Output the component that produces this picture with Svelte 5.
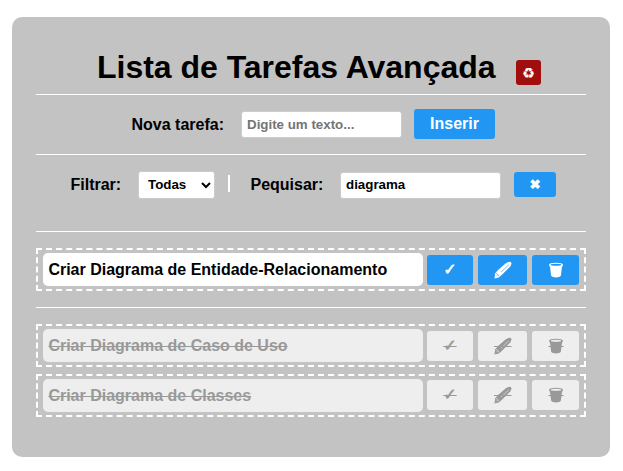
<script>
  const pending = ['Criar Diagrama de Entidade-Relacionamento'];
  const done = ['Criar Diagrama de Caso de Uso', 'Criar Diagrama de Classes'];
  let search = $state('diagrama');
</script>

{#snippet task(text, finished)}
  <li class="task" class:finished>
    <span class="text">{text}</span>
    <button class="btn check">✓</button>
    <button class="btn edit" aria-label="Editar">
      <svg width="20" height="20" viewBox="0 0 20 20">
        <path class="ink" d="M1.4 18.4 L2.3 13.2 L5 10 L12.6 3.4 Q15.6 1.2 17.8 1.9 Q19.2 3.2 17.4 6.3 L9 14.8 L5.8 17.4 Z" />
        <path class="cut" d="M3 13.4 Q5.2 13.8 5.8 16.4 M8 12.2 L15.8 4.8 M3.2 16.4 L4.4 15.2" />
        {#if finished}<path class="strike" d="M1 10.5 H18.5" />{/if}
      </svg>
    </button>
    <button class="btn remove" aria-label="Remover">
      <svg width="16" height="20" viewBox="0 0 16 20">
        <path class="ink" d="M1 4.8 Q1.2 2.7 8 2.7 Q14.8 2.7 15 4.8 Q15 6 14 6.7 L12.8 16 Q11.8 17.4 8 17.4 Q4.2 17.4 3.2 16 L2 6.7 Q1 6 1 4.8 Z" />
        <ellipse class="hole" cx="8" cy="4.8" rx="5.3" ry="1" />
        {#if finished}<path class="strike" d="M.5 10.5 H15.5" />{/if}
      </svg>
    </button>
  </li>
{/snippet}

<main>
  <header>
    <h1>Lista de Tarefas Avançada</h1>
    <button class="btn reset">♻</button>
  </header>
  <section class="new">
    <label for="new">Nova tarefa:</label>
    <input id="new" placeholder="Digite um texto..." />
    <button class="btn insert">Inserir</button>
  </section>
  <section class="filters">
    <label for="filter">Filtrar:</label>
    <select id="filter"><option>Todas</option></select>
    <span class="divider"></span>
    <label for="search">Pequisar:</label>
    <input id="search" bind:value={search} />
    <button class="btn clear">✖</button>
  </section>
  <ul class="pending">
    {#each pending as text}{@render task(text, false)}{/each}
  </ul>
  <ul>
    {#each done as text}{@render task(text, true)}{/each}
  </ul>
</main>

<style>
  :global(body) { background: #fff; }
  main {
    box-sizing: border-box;
    width: 598px;
    height: 440px;
    margin: 17px 0 0 12px;
    padding: 0 24px;
    border-radius: 10px;
    background: #c3c3c3;
    font: bold 16px "Liberation Sans", Arial, sans-serif;
    color: #000;
    display: flow-root;
  }
  header, section, ul { box-sizing: border-box; border-bottom: 1px solid #fff; }
  header, section { display: flex; align-items: flex-start; }
  header { height: 78px; padding-left: 61px; }
  h1 { margin: 32px 0 0; font-size: 32px; line-height: 37px; width: 419px; white-space: nowrap; letter-spacing: -.02px; }
  .btn {
    box-sizing: border-box;
    display: flex;
    align-items: center;
    justify-content: center;
    flex: none;
    border: 0;
    border-radius: 3px;
    padding: 0;
    margin: 0;
    background: #2196f3;
    color: #fff;
    font: bold 16px "Liberation Sans", "DejaVu Sans", sans-serif;
  }
  .reset { width: 25px; height: 25px; margin-top: 43px; background: #a00e0e; font-size: 14px; -webkit-text-stroke: .2px currentColor; }
  .clear, .check { -webkit-text-stroke: .6px currentColor; }
  .new { height: 60px; padding-left: 95.5px; }
  .new label { margin-top: 21px; width: 109.5px; line-height: 18px; }
  input, select {
    box-sizing: border-box;
    border: 1px solid #ccc;
    border-radius: 3px;
    background: #fff;
    color: #000;
    font: bold 13.333px "Liberation Sans", Arial, sans-serif;
    margin: 0;
    flex: none;
  }
  input { width: 161px; height: 27px; padding: 1px 5px; }
  input::placeholder { color: #757575; }
  .new input { margin-top: 16px; }
  .insert { width: 81px; height: 30px; margin: 14px 0 0 12px; }
  .filters { height: 77px; padding-left: 34.5px; }
  .filters label { margin-top: 21px; width: 67.5px; line-height: 18px; }
  select { width: 77px; height: 28px; margin-top: 16px; padding: 0 0 2px 5px; }
  .divider { width: 2px; height: 17px; margin: 20px 20.5px 0 13px; background: #fff; }
  .filters label[for="search"] { width: 89.5px; }
  .filters input { margin-top: 17px; padding-top: 0; padding-bottom: 3px; }
  .clear { width: 42px; height: 25px; margin: 17px 0 0 13px; font-size: 13.333px; }
  ul { list-style: none; margin: 0; padding: 16px 0 0; display: flex; flex-direction: column; gap: 7px; }
  ul:last-child { border: 0; }
  .pending { height: 76px; }
  .task {
    box-sizing: border-box;
    height: 43px;
    padding: 3px 5px;
    border: 2px dashed #fff;
    display: flex;
    align-items: flex-start;
  }
  .text {
    box-sizing: border-box;
    width: 380px;
    height: 33px;
    padding-left: 5.4px;
    line-height: 33px;
    border-radius: 5px;
    background: #fff;
    margin-right: 4px;
  }
  .task .btn { height: 30px; margin-top: 2px; }
  .task + .task .btn { margin-top: 1px; }
  .task .check { width: 46px; margin-right: 5px; padding-bottom: 2px; }
  .task .edit { width: 49px; margin-right: 5px; }
  .task .remove { width: 47px; }
  .finished .text, .finished .btn { background: #eee; color: #999; text-decoration: line-through; }
  svg { display: block; }
  .ink { fill: currentColor; }
  .cut { fill: none; stroke: #2196f3; stroke-width: .6; }
  .hole { fill: #2196f3; }
  .finished .cut { stroke: #eee; }
  .finished .hole { fill: #eee; }
  .strike { stroke: currentColor; stroke-width: 1; }
</style>
